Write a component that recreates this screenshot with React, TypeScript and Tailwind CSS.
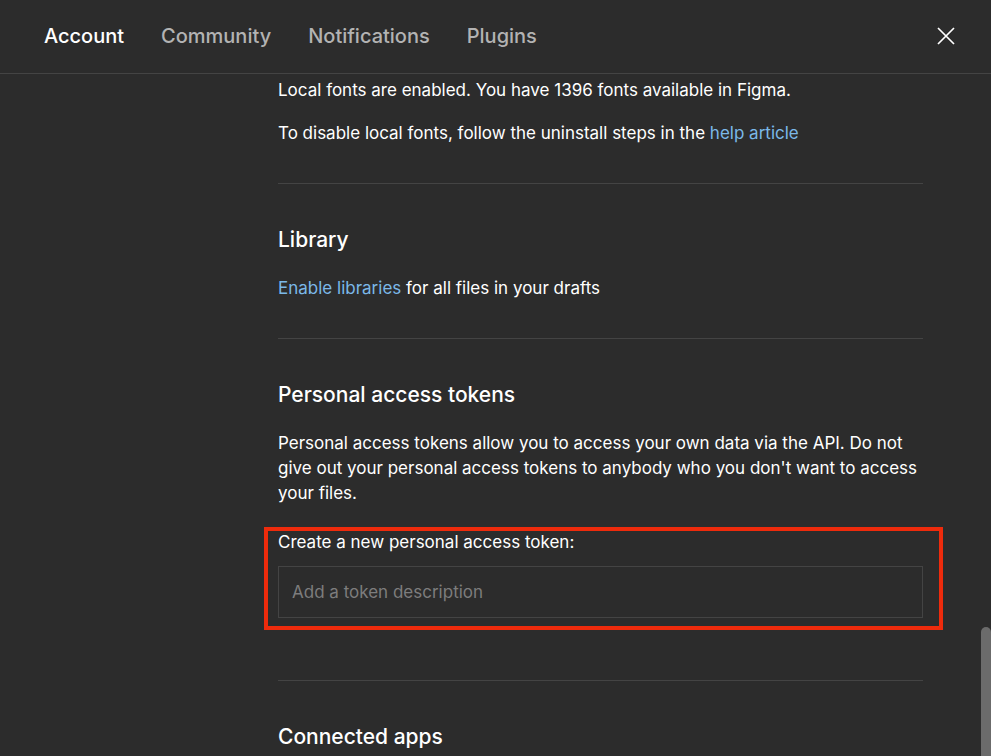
import React from 'react';

const tabs = ['Community', 'Notifications', 'Plugins'];

export default function App() {
  return (
    <div className="flex h-screen flex-col overflow-hidden bg-[#2c2c2c] font-['Inter',sans-serif] text-white">
      <header className="flex h-[74px] shrink-0 items-center justify-between border-b border-[#444444] pr-[31px] pb-0.5 pl-11">
        <nav className="flex gap-[37px] text-[20px] leading-6 font-medium">
          <button type="button" aria-current="page">Account</button>
          {tabs.map((tab) => (
            <button key={tab} type="button" className="text-[#b3b3b3]">{tab}</button>
          ))}
        </nav>
        <button type="button" aria-label="Close" className="flex size-7 items-center justify-center">
          <svg viewBox="0 0 18 18" className="size-[18px]" fill="none" stroke="currentColor" strokeWidth="1.7">
            <path d="M1 1 17 17M17 1 1 17" />
          </svg>
        </button>
      </header>
      <div className="flex min-h-0 flex-1">
        <main className="min-w-0 flex-1 overflow-hidden pr-[58px] pl-[278px] text-[17px] leading-[25px]">
          <section className="border-b border-[#444444] pt-1 pb-[37px]">
            <p>Local fonts are enabled. You have 1396 fonts available in Figma.</p>
            <p className="mt-[18px]">
              To disable local fonts, follow the uninstall steps in the <a href="#help" className="text-[#7bb8e8]">help article</a>
            </p>
          </section>
          <section className="border-b border-[#444444] pt-10 pb-[37px]">
            <h2 className="text-[21px] leading-8 font-medium">Library</h2>
            <p className="mt-5"><a href="#libraries" className="text-[#7bb8e8]">Enable libraries</a> for all files in your drafts</p>
          </section>
          <section className="border-b border-[#444444] pt-10 pb-[50px]">
            <h2 className="text-[21px] leading-8 font-medium">Personal access tokens</h2>
            <p className="mt-5">
              Personal access tokens allow you to access your own data via the API. Do not give out your personal access tokens to anybody who you don't want to access your files.
            </p>
            <div className="-mr-5 -ml-3.5 mt-[21px] border-4 border-[#ee2b0c] pr-4 pb-2 pl-2.5">
              <label htmlFor="token" className="block leading-[23px]">Create a new personal access token:</label>
              <input id="token" type="text" placeholder="Add a token description" className="mt-3 block h-[52px] w-full border border-[#444444] bg-transparent px-[13px] outline-none placeholder:text-[#7d7d7d]" />
            </div>
          </section>
          <section className="pt-10">
            <h2 className="text-[21px] leading-8 font-medium">Connected apps</h2>
          </section>
        </main>
        <div className="flex w-[10px] shrink-0 flex-col justify-end">
          <div className="h-[129px] rounded-t-full bg-[#6b6b6b]" />
        </div>
      </div>
    </div>
  );
}
